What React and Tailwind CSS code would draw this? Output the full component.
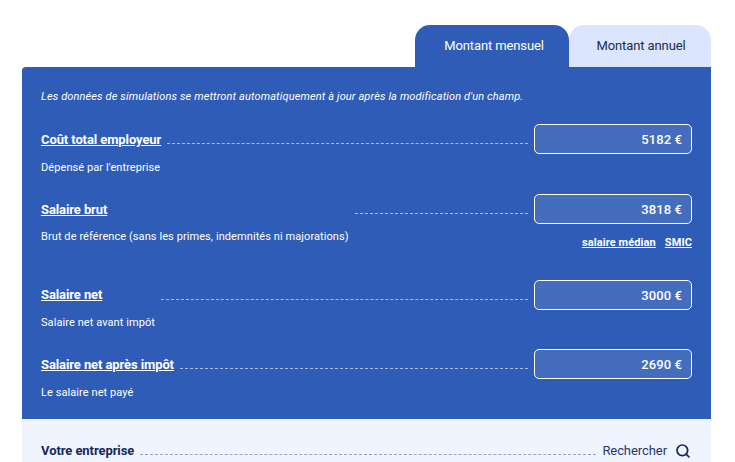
import { Search } from "lucide-react";

const rows = [
  { label: "Coût total employeur", desc: "Dépensé par l'entreprise", value: "5182 €", h: "h-[70px]", text: "pt-[7px]", gap: "mt-[13px]" },
  { label: "Salaire brut", desc: "Brut de référence (sans les primes, indemnités ni majorations)", value: "3818 €", h: "h-[86px]", text: "pt-[7px]", gap: "mt-[12px]", links: true },
  { label: "Salaire net", desc: "Salaire net avant impôt", value: "3000 €", h: "h-[69px]", text: "pt-[6px]", gap: "mt-[13px]" },
  { label: "Salaire net après impôt", desc: "Le salaire net payé", value: "2690 €", h: "h-[70px]", text: "pt-[7px]", gap: "mt-[13px]" },
];

function Row({ label, desc, value, h, text, gap, links }) {
  return (
    <div className={`flex items-start ${h}`}>
      <div className={`flex flex-col ${text}`}>
        <a className="text-[13px] leading-[17px] font-bold underline tracking-[-0.1px] text-white">{label}</a>
        <p className={`text-[11px] leading-[14px] text-white tracking-[0.08px] ${gap}`}>{desc}</p>
      </div>
      <div className="flex-1 mx-[6px] mt-[19px] border-t border-dashed border-[#a9bde6]" />
      <div className="flex flex-col items-end">
        <div className="w-[158px] h-[30px] flex items-center justify-end pr-[9px] rounded-[5px] border border-white bg-[#456dbd] text-[13px] font-medium tracking-[0.1px] pt-[1px] text-white">
          {value}
        </div>
        {links && (
          <div className="flex gap-[9px] mt-[12px] text-[11px] leading-[14px] font-bold tracking-[0.1px] text-white">
            <a className="underline">salaire médian</a>
            <a className="underline">SMIC</a>
          </div>
        )}
      </div>
    </div>
  );
}

export default function App() {
  return (
    <div className="w-[735px] h-[462px] overflow-hidden bg-white font-['Roboto',sans-serif]">
      <div className="ml-[22px] w-[689px] pt-[25px]">
        {/* TABS */}
        <div className="flex justify-end h-[42px]">
          <div className="w-[154px] flex items-center justify-center pl-[4px] rounded-t-[15px] bg-[#2f5cb7] text-white text-[13px] tracking-[-0.12px]">
            Montant mensuel
          </div>
          <div className="w-[142px] flex items-center justify-center pl-[2px] rounded-t-[15px] bg-[#dbe6fe] text-[#1b2a4e] text-[13px] tracking-[-0.1px]">
            Montant annuel
          </div>
        </div>

        {/* SIMULATION */}
        <div className="h-[352px] bg-[#2f5cb7] rounded-tl-[4px] px-[19px] pt-[23px]">
          <p className="text-[11px] leading-[14px] italic text-white tracking-[0.13px] mb-[20px]">
            Les données de simulations se mettront automatiquement à jour après la modification d'un champ.
          </p>
          {rows.map((r) => (
            <Row key={r.label} {...r} />
          ))}
        </div>

        {/* ENTREPRISE */}
        <div className="h-[43px] bg-[#f0f4fe] px-[19px] flex items-start pt-[23px]">
          <span className="text-[13px] leading-[17px] font-bold tracking-[-0.07px] text-[#16295c]">Votre entreprise</span>
          <div className="flex-1 mx-[6px] mt-[12px] border-t border-dashed border-[#9aa3b8]" />
          <span className="text-[13px] leading-[17px] tracking-[-0.07px] text-[#1b3a6e]">Rechercher</span>
          <Search className="ml-[8px] mr-[1px] mt-[1px] text-[#16295c]" size={16} strokeWidth={2.6} />
        </div>
      </div>
    </div>
  );
}
